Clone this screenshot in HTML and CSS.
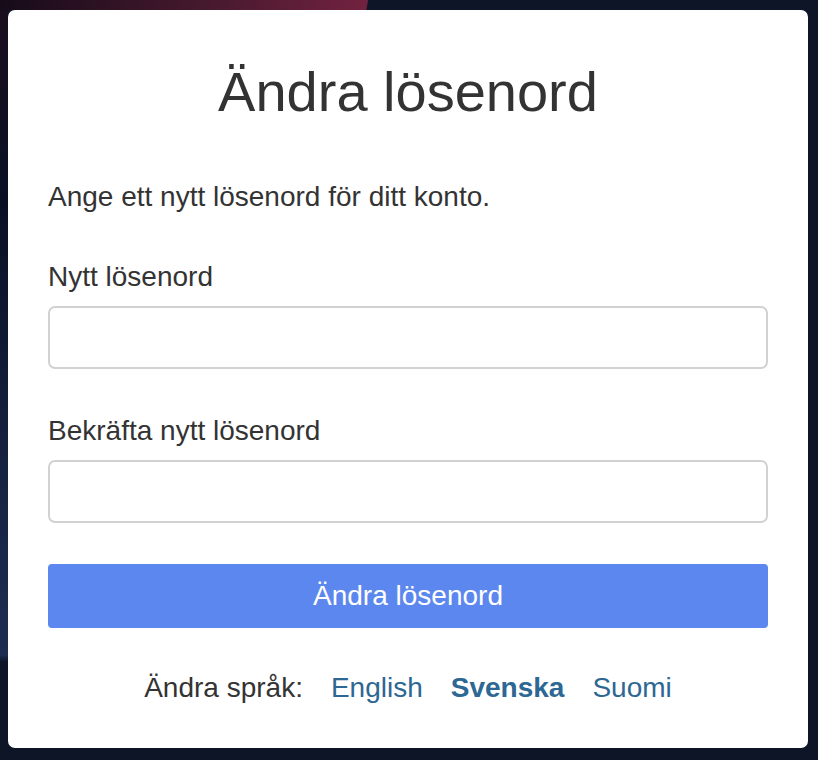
FILE: index.html
```html
<!DOCTYPE html>
<html lang="sv">

<head>
    <meta charset="utf-8" />
    <title>Ändra lösenord</title>
    <link rel="stylesheet" href="styles.css">
</head>

<body>
    <div class="card">
        <h1 class="title">Ändra lösenord</h1>
        <p class="intro">Ange ett nytt lösenord för ditt konto.</p>
        <form class="form">
            <label class="field">
                <span class="label">Nytt lösenord</span>
                <input class="input" type="password" />
            </label>
            <label class="field">
                <span class="label">Bekräfta nytt lösenord</span>
                <input class="input" type="password" />
            </label>
            <button class="submit" type="button">Ändra lösenord</button>
        </form>
        <div class="lang">
            <span>Ändra språk:</span>
            <a href="#">English</a>
            <a href="#" class="current">Svenska</a>
            <a href="#">Suomi</a>
        </div>
    </div>
</body>

</html>
```

FILE: styles.css
```css
* {
    box-sizing: border-box;
    font-family: "Liberation Sans", Arial, sans-serif;
}

html,
body {
    margin: 0;
    min-height: 100vh;
}

body {
    background:
        linear-gradient(100deg, #160b19 0, #4a1a30 220px, #72223f 362px, transparent 363px) top left / 100% 10px no-repeat,
        linear-gradient(to bottom, #1a0e1e 0, #0a1024 200px, #15213f 450px, #1d2d52 655px, #0e1526 662px) top left / 8px 100% no-repeat,
        #0e1526;
    padding: 10px 10px 13px 8px;
    color: #333;
}

.card {
    background-color: #fff;
    border-radius: 7px;
    width: 800px;
    padding: 50px 40px 44px;
}

.title {
    font-size: 56px;
    font-weight: normal;
    line-height: 64px;
    text-align: center;
    margin: 0 0 57px;
}

.intro {
    font-size: 28px;
    line-height: 32px;
    margin: 0 0 48px;
}

.field {
    display: flex;
    flex-direction: column;
    gap: 13px;
    margin-bottom: 46px;
}

.label {
    font-size: 28px;
    line-height: 32px;
}

.input {
    height: 63px;
    border: 2px solid #d2d2d2;
    border-radius: 7px;
    font-size: 28px;
    padding: 0 14px;
}

.submit {
    display: block;
    width: 100%;
    height: 64px;
    margin-top: -5px;
    border: none;
    border-radius: 4px;
    background-color: #5c87ee;
    color: #fff;
    font-size: 28px;
}

.lang {
    display: flex;
    justify-content: center;
    gap: 28px;
    margin-top: 44px;
    font-size: 28px;
    line-height: 32px;
}

.lang a {
    color: #2d6793;
    text-decoration: none;
}

.lang .current {
    font-weight: bold;
}
```
